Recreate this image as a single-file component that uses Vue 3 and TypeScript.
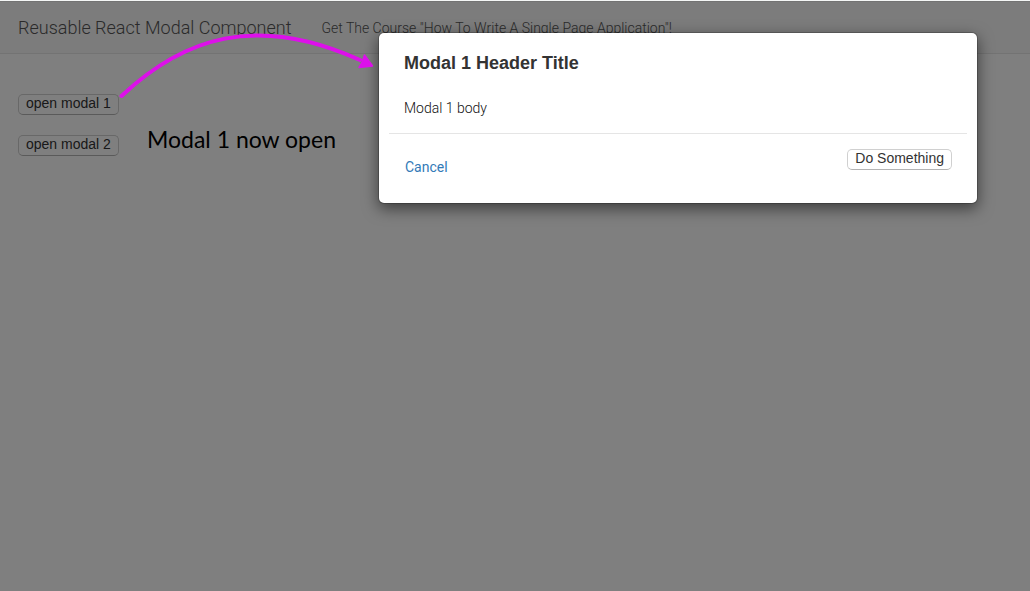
<script setup lang="ts">
import { ref } from 'vue'

const modals = [1, 2]
const active = ref<number | null>(1)

function open(id: number): void {
  active.value = id
}

function close(): void {
  active.value = null
}
</script>

<template>
  <div class="page">
    <header class="navbar">
      <a class="brand" href="#">Reusable React Modal Component</a>
      <a class="nav-link" href="#">Get The Course "How To Write A Single Page Application"!</a>
    </header>
    <main class="content">
      <button v-for="id in modals" :key="id" type="button" class="btn" @click="open(id)">open modal {{ id }}</button>
    </main>

    <div v-if="active !== null" class="backdrop">
      <section class="modal" role="dialog" aria-labelledby="modal-title">
        <h4 id="modal-title" class="modal-title">Modal {{ active }} Header Title</h4>
        <p class="modal-body">Modal {{ active }} body</p>
        <footer class="modal-footer">
          <a class="cancel" href="#" @click.prevent="close">Cancel</a>
          <button type="button" class="btn">Do Something</button>
        </footer>
      </section>
    </div>

    <template v-if="active !== null">
      <svg class="arrow" width="270" height="80" viewBox="0 0 270 80" aria-hidden="true">
        <path d="M11.500 75 C73 17 146 -8 250 39" fill="none" stroke="#dd10ea" stroke-width="4" stroke-linecap="round" />
        <path d="M254.500 34 L262.500 45 L249 46.500 L252 41.500 Z" fill="#dd10ea" stroke="#dd10ea" stroke-width="1.500" stroke-linejoin="round" />
      </svg>
      <p class="note">Modal {{ active }} now open</p>
    </template>
  </div>
</template>

<style>
html,
body,
#app {
  height: 100%;
}

body {
  margin: 0;
}
</style>

<style scoped>
.page {
  position: relative;
  box-sizing: border-box;
  min-height: 100%;
  border-top: 1px solid #f4f6f5;
  background: #fff;
  color: #333;
  font-family: Roboto, "Liberation Sans", sans-serif;
  font-size: 14px;
  font-weight: 300;
  line-height: 20px;
}

.navbar {
  display: flex;
  align-items: center;
  gap: 30px;
  height: 51px;
  padding: 0 18px;
  border-top: 1px solid #e7e7e7;
  border-bottom: 1px solid #e7e7e7;
  background: #f8f8f8;
}

.brand,
.nav-link {
  color: #555;
  text-decoration: none;
  white-space: nowrap;
}

.brand {
  font-size: 18px;
}

.content {
  display: flex;
  flex-direction: column;
  align-items: flex-start;
  gap: 20px;
  padding: 40px 18px;
}

.btn {
  box-sizing: border-box;
  height: 21px;
  padding: 0 7px 2px;
  border: 1px solid #d0d0d0;
  border-bottom-color: #b4b4b4;
  border-radius: 5px;
  background: #fff;
  color: #333;
  font-family: "Liberation Sans", Arial, sans-serif;
  font-size: 14px;
  font-weight: 400;
  line-height: 17px;
}

.backdrop {
  position: absolute;
  inset: 0;
  display: flex;
  align-items: flex-start;
  justify-content: flex-end;
  padding: 31px 52px;
  background: rgba(0, 0, 0, 0.5);
}

.modal {
  box-sizing: border-box;
  width: 600px;
  padding: 20px 10px 25px;
  border: 1px solid rgba(0, 0, 0, 0.2);
  border-radius: 6px;
  background: #fff;
  background-clip: padding-box;
  box-shadow: 0 5px 15px rgba(0, 0, 0, 0.5);
}

.modal-title {
  margin: 0;
  padding: 0 15px;
  font-family: "Liberation Sans", Arial, sans-serif;
  font-size: 18px;
  font-weight: 700;
  line-height: 20px;
}

.modal-body {
  margin: 0;
  padding: 25px 15px 15px;
  color: #111;
}

.modal-footer {
  display: flex;
  align-items: flex-start;
  justify-content: space-between;
  padding: 15px 15px 1px;
  border-top: 1px solid #e5e5e5;
}

.cancel {
  padding: 8px 1px 0;
  color: #337ab7;
  font-weight: 400;
  text-decoration: none;
}

.arrow {
  position: absolute;
  top: 20px;
  left: 110px;
  pointer-events: none;
}

.note {
  position: absolute;
  top: 123px;
  left: 147px;
  margin: 0;
  color: #000;
  font-family: Lato, sans-serif;
  font-size: 23px;
  font-weight: 400;
  line-height: 30px;
  white-space: nowrap;
}
</style>
